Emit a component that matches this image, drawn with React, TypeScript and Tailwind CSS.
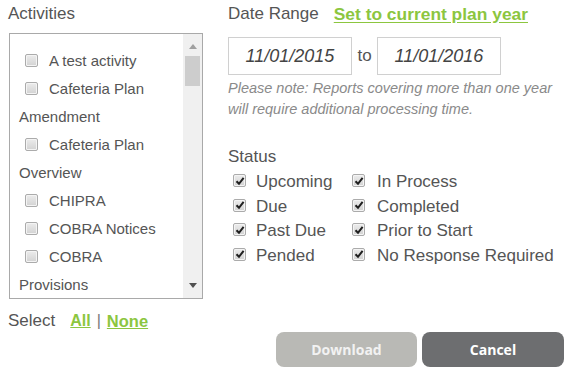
import React from 'react';

const activities = [
  'A test activity',
  'Cafeteria Plan Amendment',
  'Cafeteria Plan Overview',
  'CHIPRA',
  'COBRA Notices',
  'COBRA Provisions',
];

const statusLeft = ['Upcoming', 'Due', 'Past Due', 'Pended'];
const statusRight = ['In Process', 'Completed', 'Prior to Start', 'No Response Required'];

function Box({ checked }: { checked?: boolean }) {
  return (
    <span className="inline-flex items-center justify-center w-[13px] h-[13px] border border-[#ababab] rounded-[2px] bg-gradient-to-b from-[#ececec] to-[#d2d2d2] shadow-[inset_0_0_0_1px_#f4f4f4] shrink-0">
      {checked && (
        <svg width="10" height="10" viewBox="0 0 10 10">
          <path d="M1.5 5.2 L4 7.8 L8.6 1.8" fill="none" stroke="#1f1f1f" strokeWidth="2" />
        </svg>
      )}
    </span>
  );
}

export default function App() {
  return (
    <div className="w-[572px] h-[376px] bg-white text-[#555] font-['Liberation_Sans',Arial,sans-serif] flex overflow-hidden">
      {/* left column */}
      <div className="w-[220px] pl-[8px] pt-[3px] shrink-0">
        <div className="text-[17px] leading-[22px]">Activities</div>
        <div className="ml-px mt-[8px] w-[194px] h-[266px] border border-[#a9a9a9] flex overflow-hidden">
          <div className="flex-1 pl-[9px] pr-[14px] pt-[13px] text-[15px] leading-[28px]">
            {activities.map((a) => (
              <div key={a}>
                <span className="inline-block ml-[6px] mr-[11px] align-[-1px] leading-none h-[13px]">
                  <Box />
                </span>
                {a}
              </div>
            ))}
          </div>
          <div className="w-[19px] bg-[#f0f0f0] flex flex-col items-center">
            <div className="h-[22px] pt-[10px]">
              <svg width="8" height="5" viewBox="0 0 8 5">
                <path d="M0 5 L4 0 L8 5 Z" fill="#a0a0a0" />
              </svg>
            </div>
            <div className="w-[15px] h-[30px] bg-[#cdcdcd]" />
            <div className="flex-1" />
            <div className="h-[22px] pt-[7px]">
              <svg width="8" height="5" viewBox="0 0 8 5">
                <path d="M0 0 L8 0 L4 5 Z" fill="#505050" />
              </svg>
            </div>
          </div>
        </div>
        <div className="mt-[11px] flex items-center leading-[22px]">
          <span className="text-[17px]">Select</span>
          <a className="ml-[15px] text-[16px] font-bold text-[#8cc63f] underline">All</a>
          <span className="mx-[6px] text-[16px] text-[#777]">|</span>
          <a className="text-[16.5px] font-bold text-[#8cc63f] underline">None</a>
        </div>
      </div>

      {/* right column */}
      <div className="flex-1 pl-[8px] pt-[3px] pr-[8px]">
        <div className="flex items-center leading-[22px]">
          <span className="text-[17px]">Date Range</span>
          <a className="ml-[15px] text-[17.4px] font-bold text-[#8cc63f] underline underline-offset-2">
            Set to current plan year
          </a>
        </div>
        <div className="mt-[12px] flex items-center">
          <div className="w-[124px] h-[38px] border border-[#d0d0d0] flex items-center justify-center italic text-[18px] text-[#444]">
            11/01/2015
          </div>
          <span className="w-[25px] text-center text-[17px]">to</span>
          <div className="w-[124px] h-[38px] border border-[#d0d0d0] flex items-center justify-center italic text-[18px] text-[#444]">
            11/01/2016
          </div>
        </div>
        <p className="mt-[3px] italic text-[14.5px] leading-[21px] text-[#8a8a8a]">
          Please note: Reports covering more than one year
          <br />
          will require additional processing time.
        </p>
        <div className="mt-[25px] text-[17px] leading-[24px]">Status</div>
        <div className="flex text-[17px] leading-[24.6px] mt-px">
          <div className="w-[124px] pl-[5px]">
            {statusLeft.map((s) => (
              <div key={s} className="flex items-center gap-[10px]">
                <span className="-mt-[3px]">
                  <Box checked />
                </span>
                {s}
              </div>
            ))}
          </div>
          <div>
            {statusRight.map((s) => (
              <div key={s} className="flex items-center gap-[12px]">
                <span className="-mt-[3px]">
                  <Box checked />
                </span>
                {s}
              </div>
            ))}
          </div>
        </div>
        <div className="mt-[64px] flex justify-end gap-[5px]">
          <button className="w-[141px] h-[35px] rounded-[8px] bg-[#b9b9b5] text-[#f2f2f2] font-bold text-[14px] font-['Open_Sans',sans-serif]">
            Download
          </button>
          <button className="w-[142px] h-[35px] rounded-[8px] bg-[#6d6e70] text-white font-bold text-[14px] font-['Open_Sans',sans-serif]">
            Cancel
          </button>
        </div>
      </div>
    </div>
  );
}
